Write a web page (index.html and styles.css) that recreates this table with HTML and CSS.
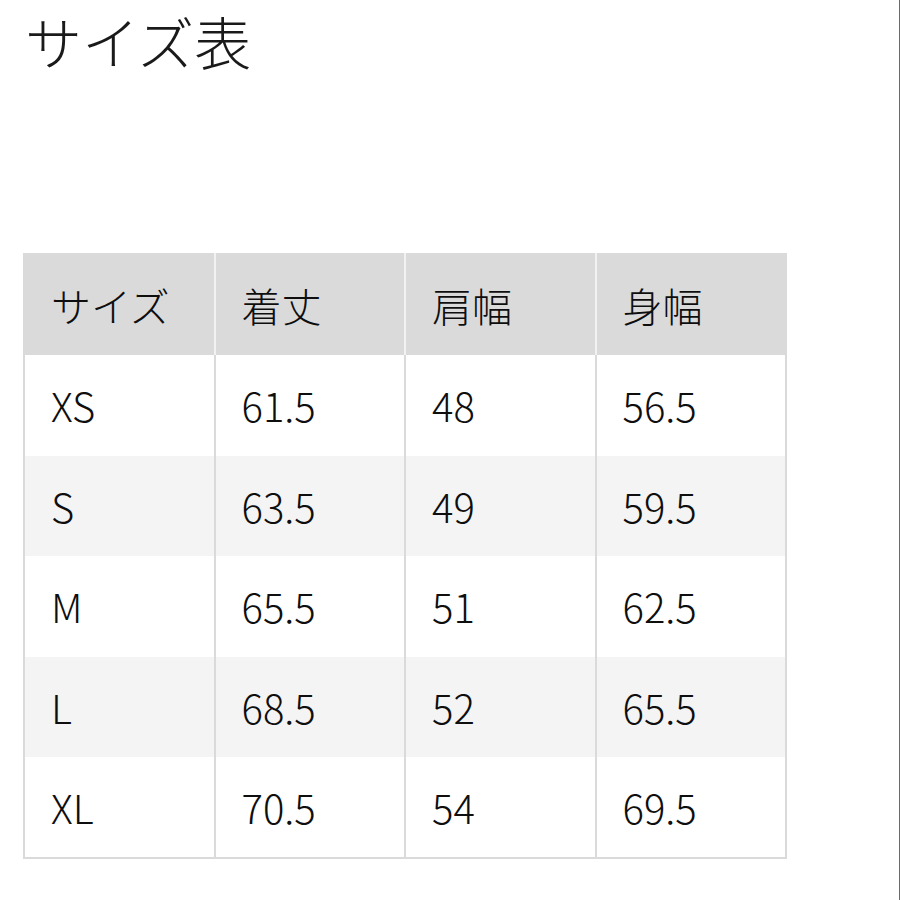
FILE: index.html
```html
<!DOCTYPE html>
<html lang="ja">
<head>
<meta charset="utf-8">
<link rel="stylesheet" href="styles.css">
</head>
<body>
<div class="page">
  <h1 class="title">サイズ表</h1>
  <table class="sizes">
    <thead>
      <tr><th>サイズ</th><th>着丈</th><th>肩幅</th><th>身幅</th></tr>
    </thead>
    <tbody>
      <tr><td>XS</td><td>61.5</td><td>48</td><td>56.5</td></tr>
      <tr class="alt"><td>S</td><td>63.5</td><td>49</td><td>59.5</td></tr>
      <tr><td>M</td><td>65.5</td><td>51</td><td>62.5</td></tr>
      <tr class="alt"><td>L</td><td>68.5</td><td>52</td><td>65.5</td></tr>
      <tr><td>XL</td><td>70.5</td><td>54</td><td>69.5</td></tr>
    </tbody>
  </table>
</div>
</body>
</html>
```

FILE: styles.css
```css
html, body {
  margin: 0;
  padding: 0;
  background: #fff;
}
.page {
  box-sizing: border-box;
  width: 900px;
  height: 900px;
  border-right: 1px solid #6a6a6a;
  padding: 0 0 0 23px;
  font-family: "Noto Sans CJK JP", "Noto Sans", sans-serif;
  color: #1a1a1a;
}
.title {
  margin: 0;
  padding: 0 0 0 2px;
  font-size: 57px;
  font-weight: 300;
  line-height: 80px;
  color: #1a1a1a;
}
.sizes {
  margin-top: 173px;
  border-collapse: collapse;
  border: 2px solid #dadada;
  table-layout: fixed;
  width: 762px;
}
.sizes th, .sizes td {
  width: 190.5px;
  box-sizing: border-box;
  padding: 0 0 0 26px;
  text-align: left;
  font-size: 40px;
  font-weight: 300;
  color: #0e0e0e;
  border-left: 2px solid #dadada;
  border-right: 2px solid #dadada;
}
.sizes th {
  height: 101px;
  background: #dadada;
  border-left-color: #f2f2f2;
  border-right-color: #f2f2f2;
}
.sizes th:first-child { border-left-color: #dadada; }
.sizes th:last-child { border-right-color: #dadada; }
.sizes td {
  height: 100.5px;
  background: #fff;
}
.sizes tr.alt td {
  background: #f4f4f4;
}
```
